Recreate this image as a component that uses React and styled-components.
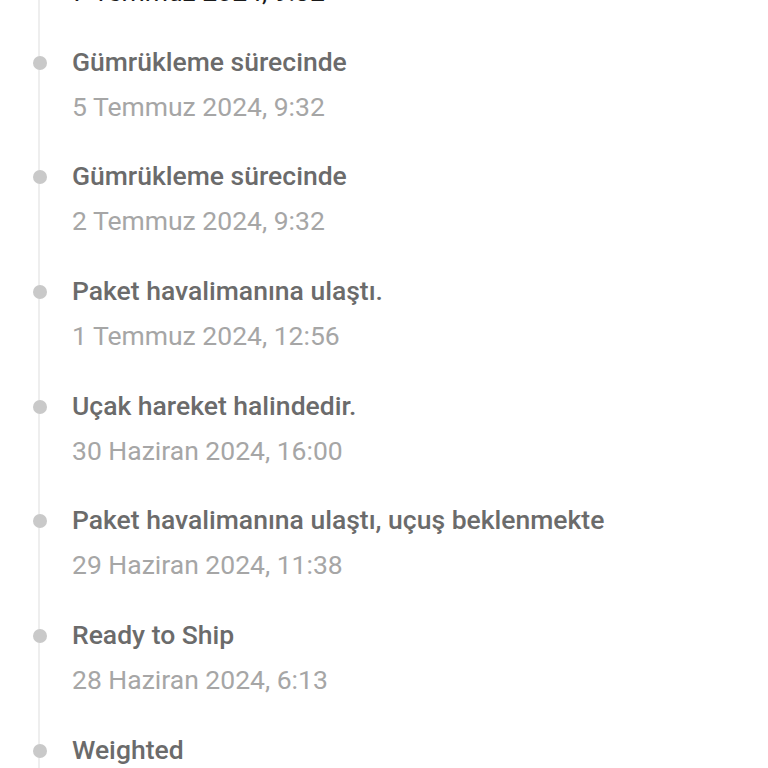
import React from 'react';
import styled, { createGlobalStyle } from 'styled-components';

const GlobalStyle = createGlobalStyle`
  html, body {
    margin: 0;
    background: #ffffff;
    font-family: Roboto, "Noto Sans", sans-serif;
  }
`;

const Page = styled.div`
  width: 768px;
  height: 768px;
  overflow: hidden;
  background: #ffffff;
`;

const List = styled.ul`
  list-style: none;
  margin: -88px 0 0 0;
  padding: 0;
  background: linear-gradient(#eeeeee, #eeeeee) no-repeat 38px 0 / 2px 100%;
`;

const Item = styled.li`
  display: grid;
  grid-template-columns: 72px 1fr;
  padding: 12px 0 12.67px;
`;

const Marker = styled.div`
  display: flex;
  justify-content: center;
  padding: 17px 0 0 16px;
  box-sizing: border-box;
  width: 64px;
`;

const Dot = styled.span`
  width: 14px;
  height: 14px;
  border-radius: 50%;
  background: ${(p) => (p.$active ? '#bdbdbd' : '#c9c9c9')};
`;

const Content = styled.div`
  display: flex;
  flex-direction: column;
`;

const Title = styled.div`
  font-size: 26.5px;
  font-weight: 500;
  line-height: 45px;
  white-space: nowrap;
  color: ${(p) => (p.$active ? '#1a1a1a' : '#6b6b6b')};
`;

const Date = styled.div`
  font-size: 26.5px;
  line-height: 45px;
  white-space: nowrap;
  color: ${(p) => (p.$active ? '#1a1a1a' : '#a6a6a6')};
`;

const events = [
  { title: 'Teslim edildi', date: '7 Temmuz 2024, 9:32', active: true },
  { title: 'Gümrükleme sürecinde', date: '5 Temmuz 2024, 9:32' },
  { title: 'Gümrükleme sürecinde', date: '2 Temmuz 2024, 9:32' },
  { title: 'Paket havalimanına ulaştı.', date: '1 Temmuz 2024, 12:56' },
  { title: 'Uçak hareket halindedir.', date: '30 Haziran 2024, 16:00' },
  { title: 'Paket havalimanına ulaştı, uçuş beklenmekte', date: '29 Haziran 2024, 11:38' },
  { title: 'Ready to Ship', date: '28 Haziran 2024, 6:13' },
  { title: 'Weighted', date: '28 Haziran 2024, 5:40' },
];

export default function App() {
  return (
    <Page>
      <GlobalStyle />
      <List>
        {events.map((e, i) => (
          <Item key={i}>
            <Marker>
              <Dot $active={e.active} />
            </Marker>
            <Content>
              <Title $active={e.active}>{e.title}</Title>
              <Date $active={e.active}>{e.date}</Date>
            </Content>
          </Item>
        ))}
      </List>
    </Page>
  );
}
